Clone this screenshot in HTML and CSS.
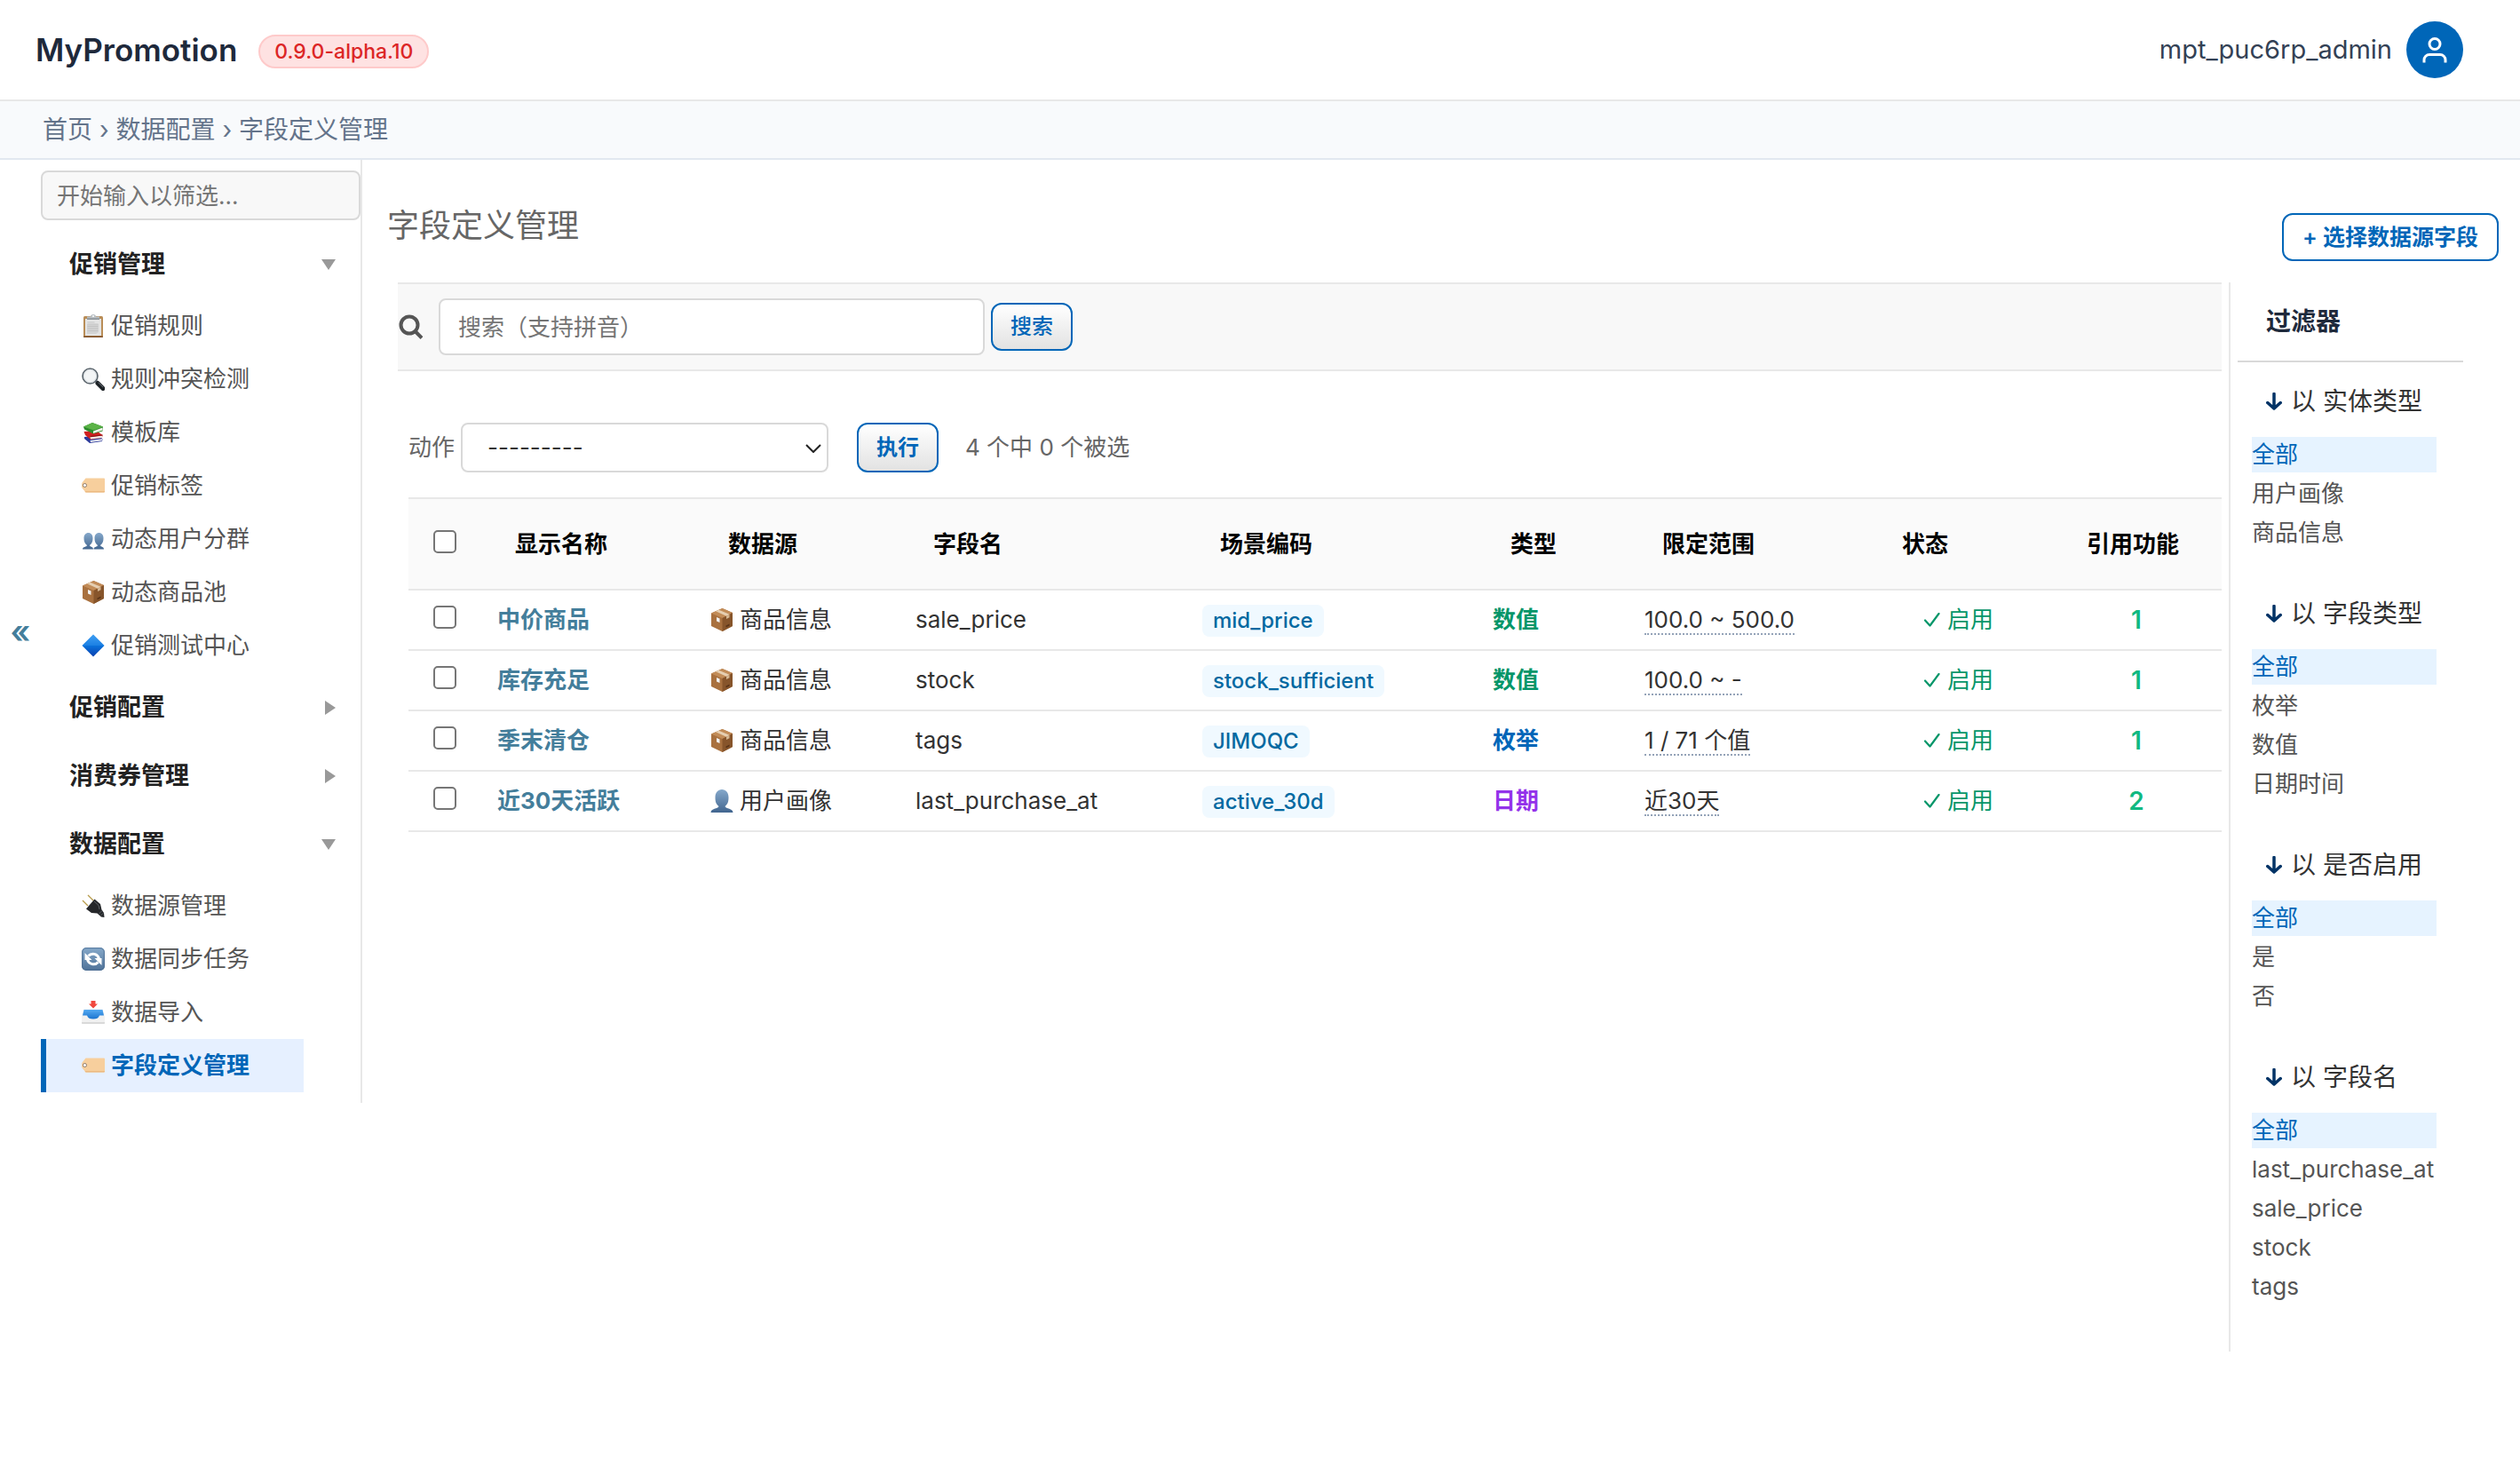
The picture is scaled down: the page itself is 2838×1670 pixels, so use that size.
FILE: index.html
```html
<!DOCTYPE html>
<html lang="zh-CN">
<head>
  <meta charset="UTF-8" />
  <meta name="viewport" content="width=device-width, initial-scale=1" />
  <title>字段定义管理 | MyPromotion</title>
  <link rel="stylesheet" href="styles.css">
</head>
<body>
  <!-- Icon sprite -->
  <svg class="sprite" aria-hidden="true">
    <defs>
      <linearGradient id="g-person" x1="0" y1="0" x2="0" y2="1">
        <stop offset="0" stop-color="#86a9cb" />
        <stop offset="1" stop-color="#41658f" />
      </linearGradient>
      <linearGradient id="g-diamond" x1="0" y1="0" x2="0" y2="1">
        <stop offset="0" stop-color="#3fa0f5" />
        <stop offset="0.5" stop-color="#0a72dc" />
        <stop offset="1" stop-color="#0a3fae" />
      </linearGradient>
      <linearGradient id="g-sync" x1="0" y1="0" x2="0" y2="1">
        <stop offset="0" stop-color="#86a9ca" />
        <stop offset="1" stop-color="#4f7298" />
      </linearGradient>
      <linearGradient id="g-tray" x1="0" y1="0" x2="0" y2="1">
        <stop offset="0" stop-color="#55aaf2" />
        <stop offset="1" stop-color="#1b74cf" />
      </linearGradient>
    </defs>
    <symbol id="i-clipboard" viewBox="0 0 26 26">
      <rect x="2" y="2" width="22" height="24" rx="1.5" fill="#b98d57" />
      <rect x="2" y="24.5" width="22" height="1.5" rx="0.7" fill="#7d4f2a" />
      <path d="M4 5h18v19H4z" fill="#e4e4e4" />
      <path d="M6 11h13v9l-3 2H6z" fill="#d3d3d3" />
      <path d="M6.500 9h8M6.500 11h12M6.500 13.500h12M6.500 16h12M6.500 18.500h12" stroke="#bcbcbc" stroke-width="0.7" />
      <path d="M6 5.500V2.500h4a3 2.500 0 0 1 6 0h4v3z" fill="#b9bfc4" />
      <path d="M6 4.500h14v1.300H6z" fill="#7e868c" />
      <circle cx="13" cy="2" r="1" fill="#fff" />
    </symbol>
    <symbol id="i-search" viewBox="0 0 26 26">
      <path d="M16 15l3.500 3.500" stroke="#7c8790" stroke-width="3" />
      <path d="M18 17.500l6 6" stroke="#1d2226" stroke-width="5" stroke-linecap="round" />
      <path d="M19 17l5 5" stroke="#687077" stroke-width="1" stroke-linecap="round" />
      <circle cx="9.500" cy="9.500" r="8.500" fill="#f3f5f6" stroke="#59636b" stroke-width="1.600" />
      <circle cx="9.500" cy="9.500" r="7" fill="none" stroke="#d4dade" stroke-width="1" />
    </symbol>
    <symbol id="i-books" viewBox="0 0 26 26">
      <path d="M3 18l17-1.500 3.500 4-.5 2.500-14 2-6-5z" fill="#2b3a9b" />
      <path d="M9.500 22l13.500-1.800v2L10 24z" fill="#e6e6ee" />
      <path d="M2.500 12l14-1 7 5-.5 3-13 2-6-5z" fill="#cf2020" />
      <path d="M9.500 18l13.500-1.500v2.500L10 20.500z" fill="#f0e9e6" />
      <path d="M9.500 17L23.500 15.500v1L10 18.300z" fill="#8e1212" />
      <path d="M2 6.500L12 2l12 4.500-.5 5-10.500 3L3 9.500z" fill="#2c8c2d" />
      <path d="M2 6.500L12 2l12 4.500-10.500 4z" fill="#5bb347" />
      <path d="M13 11.500L23.500 7.500v3L13 14z" fill="#f2f2ea" />
    </symbol>
    <symbol id="i-tag" viewBox="0 0 26 26">
      <path d="M4.500 4.500H25a1 1 0 0 1 1 1v14a1 1 0 0 1-1 1H4.500L0.500 15.500a4 4 0 0 1-.5-2v-2a4 4 0 0 1 .5-2z" fill="#f7cf9d" />
      <path d="M4.500 20.500H25a1 1 0 0 0 1-1v-.5H3.500z" fill="#ecba82" />
      <circle cx="3.500" cy="12.500" r="2" fill="#fff" stroke="#8d7a68" stroke-width="1" />
    </symbol>
    <symbol id="i-users" viewBox="0 0 26 26">
      <path d="M1 24.500c0-3 4.500-2.500 5-4.500-2.500-2-3.500-4-3.500-8 0-3.500 2-6 5-6s5 2.500 5 6c0 4-1 6-3.500 8 .5 2 4 1.500 4 4.500z" fill="url(#g-person)" />
      <path d="M13.500 24.500c0-3 4-2.500 4.500-4.500-2.500-2-3.500-4-3.500-8 0-3.500 2-6 5-6s5 2.500 5 6c0 4-1 6-3.500 8 .5 2 4 1.500 4 4.500z" fill="url(#g-person)" />
    </symbol>
    <symbol id="i-user" viewBox="0 0 26 26">
      <path d="M0.500 26c0-5 8-4 9-7-3-2.500-4-5-4-10 0-5.500 3-9 7.500-9s7.500 3.500 7.500 9c0 5-1 7.500-4 10 1 3 9 2 9 7z" fill="url(#g-person)" />
    </symbol>
    <symbol id="i-box" viewBox="0 0 26 26">
      <path d="M1 5.500L13.500 0 25 5v15l-11.500 6L1 20z" fill="#a9713f" />
      <path d="M1 5.500L13.500 0 25 5l-11.500 6z" fill="#c28c58" />
      <path d="M13.500 11L25 5v15l-11.500 6z" fill="#87552b" />
      <path d="M6 3.300L9.500 1.700 21.500 6.800 18 8.700z" fill="#e6cfb2" />
      <path d="M18 8.700l3.500-1.900v3.500L18 12z" fill="#d5b793" />
      <path d="M7 10l3.500 1.500v4.500L7 14.500z" fill="#f2f2f2" />
      <path d="M17.500 19.500l4-2v2l-4 2z" fill="#5b3518" />
    </symbol>
    <symbol id="i-diamond" viewBox="0 0 26 26">
      <path d="M13 0.500L25.500 13 13 25.500 0.500 13z" fill="url(#g-diamond)" />
      <path d="M13 0.500L25.500 13H0.500z" fill="#3c9bf2" opacity="0.350" />
    </symbol>
    <symbol id="i-plug" viewBox="0 0 26 26">
      <path d="M1 7l6 6M7 1l6 6" stroke="#b79b4a" stroke-width="1.300" />
      <path d="M5 16.500L14.500 5.500l6.500 5.500 1.500 6.500L25 21l.5 5-3.500-.5-4.500-4-6.500-.5z" fill="#25272a" />
      <path d="M14 8l5 4.500 1 4.500" stroke="#5c6065" stroke-width="1" fill="none" />
      <path d="M19.500 22l3.500-3.500M21.500 24l3-3" stroke="#6a6e73" stroke-width="0.800" />
    </symbol>
    <symbol id="i-sync" viewBox="0 0 26 26">
      <rect width="26" height="26" rx="5" fill="url(#g-sync)" />
      <rect x="0.700" y="0.700" width="24.600" height="24.600" rx="4.500" fill="none" stroke="#4b6c90" stroke-width="0.800" />
      <path d="M7.500 9.500a7 7 0 0 1 12 3" fill="none" stroke="#fff" stroke-width="3" />
      <path d="M18.500 16.500a7 7 0 0 1-12-3" fill="none" stroke="#fff" stroke-width="3" />
      <path d="M3.500 6v8h8zM22.500 20v-8h-8z" fill="#fff" />
    </symbol>
    <symbol id="i-inbox" viewBox="0 0 26 26">
      <path d="M2.500 9.500h21L26 18v7a1 1 0 0 1-1 1H1a1 1 0 0 1-1-1v-7z" fill="#f1f1f1" />
      <path d="M2.500 10h21l1.500 6.500h-5c-1 3-3.500 4-7 4s-6-1-7-4H1z" fill="url(#g-tray)" />
      <path d="M10.500 0h5v3.500H18l-5 5-5-5h2.500z" fill="#f0483e" />
      <path d="M0 24h26v1a1 1 0 0 1-1 1H1a1 1 0 0 1-1-1z" fill="#d9d9d9" />
    </symbol>
    <symbol id="i-check" viewBox="0 0 18 16">
      <path d="M1 8.500L6.500 14.500 16.500 1" fill="none" stroke="currentColor" stroke-width="2.200" stroke-linecap="round" stroke-linejoin="round" />
    </symbol>
    <symbol id="i-arrow" viewBox="0 0 18 20">
      <path d="M9 1.500v16M1.800 11.500L9 18l7.200-6.500" fill="none" stroke="currentColor" stroke-width="3.500" stroke-linecap="round" stroke-linejoin="round" />
    </symbol>
  </svg>

  <header class="header">
    <a class="brand" href="#">MyPromotion</a>
    <span class="version">0.9.0-alpha.10</span>
    <div class="user">
      <span class="user-name">mpt_puc6rp_admin</span>
      <button class="avatar" type="button" aria-label="用户菜单">
        <svg viewBox="0 0 28 29" width="28" height="29"><circle cx="14" cy="7.500" r="6" /><path d="M2 28.500v-3a6 6 0 0 1 6-6h12a6 6 0 0 1 6 6v3" /></svg>
      </button>
    </div>
  </header>

  <nav class="breadcrumbs" aria-label="面包屑">
    <a href="#">首页</a> › <a href="#">数据配置</a> › 字段定义管理
  </nav>

  <div class="layout">
    <div class="side">
      <button class="side-toggle" type="button" aria-label="收起导航">«</button>
      <nav class="side-nav" aria-label="侧边栏">
        <input class="nav-filter" type="search" placeholder="开始输入以筛选..." aria-label="筛选导航">

        <button class="nav-group open" type="button">促销管理</button>
        <ul class="nav-list">
          <li><a href="#"><svg class="emoji"><use href="#i-clipboard" /></svg>促销规则</a></li>
          <li><a href="#"><svg class="emoji"><use href="#i-search" /></svg>规则冲突检测</a></li>
          <li><a href="#"><svg class="emoji"><use href="#i-books" /></svg>模板库</a></li>
          <li><a href="#"><svg class="emoji"><use href="#i-tag" /></svg>促销标签</a></li>
          <li><a href="#"><svg class="emoji"><use href="#i-users" /></svg>动态用户分群</a></li>
          <li><a href="#"><svg class="emoji"><use href="#i-box" /></svg>动态商品池</a></li>
          <li><a href="#"><svg class="emoji"><use href="#i-diamond" /></svg>促销测试中心</a></li>
        </ul>
        <button class="nav-group" type="button">促销配置</button>
        <button class="nav-group" type="button">消费券管理</button>
        <button class="nav-group open" type="button">数据配置</button>
        <ul class="nav-list">
          <li><a href="#"><svg class="emoji"><use href="#i-plug" /></svg>数据源管理</a></li>
          <li><a href="#"><svg class="emoji"><use href="#i-sync" /></svg>数据同步任务</a></li>
          <li><a href="#"><svg class="emoji"><use href="#i-inbox" /></svg>数据导入</a></li>
          <li><a class="active" href="#"><svg class="emoji"><use href="#i-tag" /></svg>字段定义管理</a></li>
        </ul>
      </nav>
    </div>

    <main class="content">
      <div class="content-head">
        <h1>字段定义管理</h1>
        <a class="add-link" href="#">+ 选择数据源字段</a>
      </div>

      <div class="changelist">
        <div class="results">
          <form class="toolbar">
            <label for="searchbar" aria-label="搜索">
              <svg viewBox="0 0 28 28" width="28" height="28"><circle cx="13" cy="12" r="9.500" /><path d="M19.500 19L27 26.500" /></svg>
            </label>
            <input id="searchbar" class="search-input" type="text" placeholder="搜索（支持拼音）">
            <button class="btn" type="submit">搜索</button>
          </form>

          <form class="changelist-form">
            <div class="actions">
              <label for="action">动作</label>
              <span class="select-wrap">
                <select id="action">
                  <option>---------</option>
                </select>
                <svg viewBox="0 0 18 10" width="18" height="10"><path d="M1 1l8 8 8-8" /></svg>
              </span>
              <button class="btn btn-run" type="button">执行</button>
              <span class="counter">4 个中 0 个被选</span>
            </div>

            <table class="result-table">
              <colgroup>
                <col class="c-check"><col class="c-name"><col class="c-source"><col class="c-field"><col class="c-code"><col class="c-type"><col class="c-range"><col class="c-status"><col class="c-refs">
              </colgroup>
              <thead>
                <tr>
                  <th class="check"><input type="checkbox" aria-label="全选"></th>
                  <th>显示名称</th>
                  <th>数据源</th>
                  <th>字段名</th>
                  <th>场景编码</th>
                  <th>类型</th>
                  <th>限定范围</th>
                  <th>状态</th>
                  <th>引用功能</th>
                </tr>
              </thead>
              <tbody>
                <tr>
                  <td class="check"><input type="checkbox" aria-label="选择 中价商品"></td>
                  <td><a class="name" href="#">中价商品</a></td>
                  <td><span class="source"><svg class="emoji"><use href="#i-box" /></svg>商品信息</span></td>
                  <td>sale_price</td>
                  <td><span class="code">mid_price</span></td>
                  <td><span class="type number">数值</span></td>
                  <td><span class="range">100.0 ~ 500.0</span></td>
                  <td><span class="status"><svg><use href="#i-check" /></svg>启用</span></td>
                  <td class="refs">1</td>
                </tr>
                <tr>
                  <td class="check"><input type="checkbox" aria-label="选择 库存充足"></td>
                  <td><a class="name" href="#">库存充足</a></td>
                  <td><span class="source"><svg class="emoji"><use href="#i-box" /></svg>商品信息</span></td>
                  <td>stock</td>
                  <td><span class="code">stock_sufficient</span></td>
                  <td><span class="type number">数值</span></td>
                  <td><span class="range">100.0 ~ -</span></td>
                  <td><span class="status"><svg><use href="#i-check" /></svg>启用</span></td>
                  <td class="refs">1</td>
                </tr>
                <tr>
                  <td class="check"><input type="checkbox" aria-label="选择 季末清仓"></td>
                  <td><a class="name" href="#">季末清仓</a></td>
                  <td><span class="source"><svg class="emoji"><use href="#i-box" /></svg>商品信息</span></td>
                  <td>tags</td>
                  <td><span class="code">JIMOQC</span></td>
                  <td><span class="type enum">枚举</span></td>
                  <td><span class="range">1 / 71 个值</span></td>
                  <td><span class="status"><svg><use href="#i-check" /></svg>启用</span></td>
                  <td class="refs">1</td>
                </tr>
                <tr>
                  <td class="check"><input type="checkbox" aria-label="选择 近30天活跃"></td>
                  <td><a class="name" href="#">近30天活跃</a></td>
                  <td><span class="source"><svg class="emoji"><use href="#i-user" /></svg>用户画像</span></td>
                  <td>last_purchase_at</td>
                  <td><span class="code">active_30d</span></td>
                  <td><span class="type date">日期</span></td>
                  <td><span class="range">近30天</span></td>
                  <td><span class="status"><svg><use href="#i-check" /></svg>启用</span></td>
                  <td class="refs">2</td>
                </tr>
              </tbody>
            </table>
          </form>
        </div>

        <aside class="filters">
          <h2>过滤器</h2>
          <section>
            <h3><svg><use href="#i-arrow" /></svg>以 实体类型</h3>
            <ul>
              <li class="selected"><a href="#">全部</a></li>
              <li><a href="#">用户画像</a></li>
              <li><a href="#">商品信息</a></li>
            </ul>
          </section>
          <section>
            <h3><svg><use href="#i-arrow" /></svg>以 字段类型</h3>
            <ul>
              <li class="selected"><a href="#">全部</a></li>
              <li><a href="#">枚举</a></li>
              <li><a href="#">数值</a></li>
              <li><a href="#">日期时间</a></li>
            </ul>
          </section>
          <section>
            <h3><svg><use href="#i-arrow" /></svg>以 是否启用</h3>
            <ul>
              <li class="selected"><a href="#">全部</a></li>
              <li><a href="#">是</a></li>
              <li><a href="#">否</a></li>
            </ul>
          </section>
          <section>
            <h3><svg><use href="#i-arrow" /></svg>以 字段名</h3>
            <ul>
              <li class="selected"><a href="#">全部</a></li>
              <li><a href="#">last_purchase_at</a></li>
              <li><a href="#">sale_price</a></li>
              <li><a href="#">stock</a></li>
              <li><a href="#">tags</a></li>
            </ul>
          </section>
        </aside>
      </div>
    </main>
  </div>
</body>
</html>
```
FILE: styles.css
```css
* {
  box-sizing: border-box;
  margin: 0;
  padding: 0;
}

body {
  background: #fff;
  color: #333;
  font-family: Inter, "Noto Sans CJK SC", sans-serif;
  font-size: 26px;
  line-height: 36px;
}

a {
  color: inherit;
  text-decoration: none;
}

ul {
  list-style: none;
}

button,
input,
select {
  font: inherit;
}

button {
  cursor: pointer;
}

.sprite {
  position: absolute;
  width: 0;
  height: 0;
}

.emoji {
  flex: none;
  width: 26px;
  height: 26px;
}

/* Header */
.header {
  display: flex;
  align-items: center;
  height: 114px;
  padding: 0 64px 0 40px;
  border-bottom: 2px solid #e8e8e8;
}

.brand {
  color: #1e293b;
  font-size: 35px;
  font-weight: 600;
}

.version {
  margin: 4px 0 0 24px;
  padding: 0 16px;
  border: 2px solid #fecaca;
  border-radius: 20px;
  background: #fee2e2;
  color: #dc2626;
  font-size: 23px;
  font-weight: 500;
  line-height: 34px;
}

.user {
  display: flex;
  align-items: center;
  gap: 16px;
  margin-left: auto;
}

.user-name {
  color: #334155;
  font-size: 29px;
}

.avatar {
  display: flex;
  align-items: center;
  justify-content: center;
  width: 64px;
  height: 64px;
  border: none;
  border-radius: 50%;
  background: #0066b8;
}

.avatar svg {
  fill: none;
  stroke: #fff;
  stroke-width: 3;
}

/* Breadcrumbs */
.breadcrumbs {
  padding: 0 48px;
  border-bottom: 2px solid #e2e8f0;
  background: #f8fafc;
  color: #64748b;
  font-size: 28px;
  line-height: 64px;
}

.layout {
  display: flex;
  align-items: flex-start;
}

/* Side navigation */
.side {
  display: flex;
  flex: none;
}

.side-toggle {
  width: 46px;
  border: none;
  background: none;
  color: #447e9b;
  font-size: 36px;
  font-weight: 600;
}

.side-nav {
  width: 362px;
  padding: 12px 0 11px;
  border-right: 2px solid #e8e8e8;
}

.nav-filter {
  display: block;
  width: 100%;
  height: 56px;
  margin-bottom: 11px;
  padding: 0 16px;
  border: 2px solid #d9d9d9;
  border-radius: 8px;
  background: #f8f8f8;
  outline: none;
}

input::placeholder {
  color: #757575;
}

.nav-group {
  display: flex;
  align-items: center;
  justify-content: space-between;
  width: 100%;
  height: 77px;
  padding: 0 28px 0 32px;
  border: none;
  background: none;
  color: #222;
  font-size: 27px;
  font-weight: 700;
}

.nav-group::after {
  content: "";
  border-top: 8px solid transparent;
  border-bottom: 8px solid transparent;
  border-left: 12px solid #999;
}

.nav-group.open::after {
  border-top: 12px solid #999;
  border-right: 8px solid transparent;
  border-bottom: none;
  border-left: 8px solid transparent;
}

.nav-list {
  padding: 1px 0;
}

.nav-list a {
  display: flex;
  align-items: center;
  gap: 7px;
  width: 296px;
  height: 60px;
  padding-left: 40px;
  border-left: 6px solid transparent;
  color: #555;
}

.nav-list a.active {
  border-left-color: #0066b8;
  background: #e6f0ff;
  color: #0066b8;
  font-weight: 700;
}

/* Content */
.content {
  flex: 1;
  min-width: 0;
  padding-left: 28px;
}

.content-head {
  display: flex;
  align-items: flex-start;
  justify-content: space-between;
  height: 138px;
  padding: 52px 24px 0 0;
}

.content-head h1 {
  color: #666;
  font-size: 36px;
  font-weight: 400;
  line-height: 44px;
}

.add-link {
  margin-top: 8px;
  padding: 0 21px;
  border: 2px solid #0066b8;
  border-radius: 12px;
  color: #0066b8;
  font-size: 25px;
  font-weight: 600;
  line-height: 50px;
}

.changelist {
  display: flex;
  align-items: flex-start;
  gap: 8px;
  padding: 0 64px 0 12px;
}

.results {
  flex: 1;
  min-width: 0;
}

.toolbar {
  display: flex;
  align-items: center;
  height: 100px;
  border-top: 2px solid #e8e8e8;
  border-bottom: 2px solid #e8e8e8;
  background: #f8f8f8;
}

.toolbar svg {
  display: block;
  fill: none;
  stroke: #555;
  stroke-width: 4;
}

.search-input {
  width: 615px;
  height: 64px;
  margin: 0 7px 0 18px;
  padding: 0 20px;
  border: 2px solid #d9d9d9;
  border-radius: 8px;
  background: #fff;
  outline: none;
}

.btn {
  width: 92px;
  height: 54px;
  border: 2px solid #0066b8;
  border-radius: 12px;
  background: linear-gradient(#fff, #e2e2e2);
  color: #0066b8;
  font-size: 24px;
  font-weight: 500;
}

.changelist-form {
  padding-left: 12px;
}

.actions {
  display: flex;
  align-items: center;
  height: 142px;
  padding-top: 58px;
  padding-bottom: 28px;
  color: #666;
}

.select-wrap {
  position: relative;
  width: 414px;
  margin-left: 7px;
}

.select-wrap select {
  display: block;
  width: 100%;
  height: 56px;
  padding: 0 28px;
  border: 2px solid #d9d9d9;
  border-radius: 8px;
  background: #fff;
  color: #333;
  appearance: none;
}

.select-wrap svg {
  position: absolute;
  top: 24px;
  right: 8px;
  fill: none;
  stroke: #222;
  stroke-width: 2;
  pointer-events: none;
}

.btn-run {
  height: 56px;
  margin: 0 30px 0 32px;
  font-weight: 700;
}

/* Result table */
.result-table {
  width: 100%;
  border-collapse: collapse;
  table-layout: fixed;
}

.c-check { width: 80px; }
.c-name { width: 240px; }
.c-source { width: 231px; }
.c-field { width: 323px; }
.c-code { width: 327px; }
.c-type { width: 171px; }
.c-range { width: 270px; }
.c-status { width: 208px; }
.c-refs { width: 192px; }

.result-table th {
  height: 103px;
  padding: 0 40px;
  border-top: 2px solid #e8e8e8;
  border-bottom: 2px solid #e8e8e8;
  background: #fafafa;
  color: #000;
  font-weight: 700;
  text-align: left;
  white-space: nowrap;
}

.result-table td {
  height: 68px;
  padding: 0 20px;
  border-bottom: 2px solid #e8e8e8;
  white-space: nowrap;
}

.result-table .check {
  padding: 0 0 6px 28px;
}

.check input {
  display: block;
  width: 26px;
  height: 26px;
  border: 2px solid #767676;
  border-radius: 5px;
  background: #fff;
  appearance: none;
}

.name {
  color: #447e9b;
  font-weight: 700;
}

.source {
  display: flex;
  align-items: center;
  gap: 7px;
}

.code {
  display: inline-block;
  padding: 0 12px;
  border-radius: 8px;
  background: #f0f9ff;
  color: #0369a1;
  font-size: 24px;
  font-weight: 500;
}

.type {
  font-weight: 600;
}

.type.number { color: #059669; }
.type.enum { color: #0066b8; }
.type.date { color: #9333ea; }

.range {
  border-bottom: 2px dotted #94a3b8;
}

.status {
  display: flex;
  align-items: center;
  justify-content: center;
  gap: 8px;
  color: #059669;
}

.status svg {
  width: 18px;
  height: 16px;
}

.result-table .refs {
  color: #10b981;
  font-size: 28px;
  font-weight: 600;
  text-align: center;
}

/* Filter sidebar */
.filters {
  flex: none;
  width: 264px;
  padding: 0 0 26px 8px;
  border-left: 2px solid #e8e8e8;
}

.filters h2 {
  padding: 0 32px;
  border-bottom: 2px solid #d9d9d9;
  color: #1e293b;
  font-size: 28px;
  font-weight: 700;
  line-height: 88px;
}

.filters section {
  padding: 24px 30px 27px 16px;
}

.filters h3 {
  display: flex;
  align-items: center;
  gap: 10px;
  margin-bottom: 20px;
  padding-left: 16px;
  font-size: 28px;
  font-weight: 400;
  line-height: 40px;
  white-space: nowrap;
}

.filters h3 svg {
  flex: none;
  width: 18px;
  height: 20px;
  color: #036;
}

.filters ul {
  display: grid;
  gap: 4px;
}

.filters li {
  color: #555;
  line-height: 40px;
}

.filters .selected {
  background: #e6f3ff;
  color: #0066b8;
}
```
